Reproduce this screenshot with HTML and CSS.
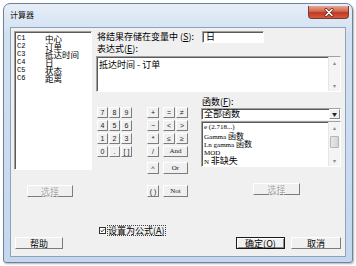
FILE: index.html
```html
<!DOCTYPE html>
<html>
<head>
<meta charset="utf-8">
<link rel="stylesheet" href="styles.css">
</head>
<body>
<div class="window">
  <div class="titlebar">
    <span class="title">计算器</span>
    <div class="close">
      <svg width="10" height="9" viewBox="0 0 10 9">
        <path d="M2 1.5 L8 7.5 M8 1.5 L2 7.5" stroke="#6b1d12" stroke-width="3" stroke-linecap="round"/>
        <path d="M2 1.5 L8 7.5 M8 1.5 L2 7.5" stroke="#fff" stroke-width="1.6" stroke-linecap="round"/>
      </svg>
    </div>
  </div>
  <div class="client">
    <div class="main">
      <div class="leftcol">
        <div class="varlist sunken">
          <div class="var"><span class="cid">C1</span><span class="cname">中心</span></div>
          <div class="var"><span class="cid">C2</span><span class="cname">订单</span></div>
          <div class="var"><span class="cid">C3</span><span class="cname">抵达时间</span></div>
          <div class="var"><span class="cid">C4</span><span class="cname">日</span></div>
          <div class="var"><span class="cid">C5</span><span class="cname">状态</span></div>
          <div class="var"><span class="cid">C6</span><span class="cname">距离</span></div>
        </div>
        <div class="btn disabled sel-left">选择</div>
      </div>
      <div class="rightcol">
        <div class="store-row">
          <span class="lbl store-lbl">将结果存储在变量中 (<u>S</u>):</span>
          <div class="input sunken">日</div>
        </div>
        <div class="lbl expr-lbl">表达式(<u>E</u>):</div>
        <div class="textarea sunken">
          <div class="ta-text">抵达时间 - 订单</div>
          <div class="vscroll">
            <span class="arr">&#9652;</span>
            <span class="arr">&#9662;</span>
          </div>
        </div>
        <div class="lower">
          <div class="keypad">
            <div class="digits">
              <div class="btn key">7</div><div class="btn key">8</div><div class="btn key">9</div>
              <div class="btn key">4</div><div class="btn key">5</div><div class="btn key">6</div>
              <div class="btn key">1</div><div class="btn key">2</div><div class="btn key">3</div>
              <div class="btn key">0</div><div class="btn key">.</div><div class="btn key">[ ]</div>
            </div>
            <div class="ops krows">
              <div class="btn key">+</div>
              <div class="btn key">−</div>
              <div class="btn key">*</div>
              <div class="btn key">/</div>
              <div class="btn key pow">^</div>
              <div class="btn key par">( )</div>
            </div>
            <div class="logic krows">
              <div class="btn key">=</div><div class="btn key">≠</div>
              <div class="btn key">&lt;</div><div class="btn key">&gt;</div>
              <div class="btn key">≤</div><div class="btn key">≥</div>
              <div class="btn key wide">And</div>
              <div class="btn key wide or">Or</div>
              <div class="btn key wide not">Not</div>
            </div>
          </div>
          <div class="funcs">
            <div class="lbl func-lbl">函数(<u>F</u>):</div>
            <div class="dropdown sunken">
              <span class="dd-text">全部函数</span>
              <span class="dd-btn">&#9660;</span>
            </div>
            <div class="flist sunken">
              <div class="fitems">
                <div class="fitem">e (2.718...)</div>
                <div class="fitem">Gamma <span class="cj">函数</span></div>
                <div class="fitem">Ln gamma <span class="cj">函数</span></div>
                <div class="fitem">MOD</div>
                <div class="fitem">N <span class="cj big">非缺失</span></div>
              </div>
              <div class="fscroll">
                <span class="arr">&#9652;</span>
                <span class="thumb"></span>
                <span class="arr">&#9662;</span>
              </div>
            </div>
            <div class="btn disabled sel-right">选择</div>
          </div>
        </div>
      </div>
    </div>
    <div class="check-row">
      <span class="checkbox">
        <svg width="7" height="7" viewBox="0 0 7 7"><path d="M1 3.5 L2.8 5.3 L6 1.6" stroke="#1b1b1b" stroke-width="1.3" fill="none"/></svg>
      </span>
      <span class="check-lbl">设置为公式(<u>A</u>)</span>
    </div>
    <div class="btn-row">
      <div class="btn help">帮助</div>
      <div class="btn ok">确定(<u>O</u>)</div>
      <div class="btn cancel">取消</div>
    </div>
  </div>
</div>
</body>
</html>
```
FILE: styles.css
```css
* { box-sizing: border-box; }
html, body { margin: 0; padding: 0; background: #fff; }
body {
  width: 356px; height: 266px; overflow: hidden;
  font-family: "Noto Sans CJK SC", "Noto Sans", sans-serif;
  font-size: 9px; color: #000;
}
u { text-decoration: underline; }

.window {
  margin: 3px 0 0 3px;
  width: 350px; height: 260px;
  border: 1px solid #6f8299;
  border-radius: 7px 7px 3px 3px;
  background: linear-gradient(#e6eef8, #d2e1f2 30px, #c4d7ee);
  padding: 0 6px 5px 6px;
  display: flex; flex-direction: column;
  box-shadow: 1px 1px 2px rgba(0,0,0,.3);
}
.titlebar { height: 23px; display: flex; align-items: flex-start; flex: none; }
.title { font-size: 8px; line-height: 10px; margin-top: 6px; color: #111; }
.close {
  margin-left: auto; margin-right: -3px; margin-top: 2px;
  width: 41px; height: 13px;
  border: 1px solid #7b3a30;
  border-top: none;
  border-radius: 0 0 4px 4px;
  background: linear-gradient(#e9a593, #d2664f 45%, #c03a22 55%, #d25a3e);
  display: flex; align-items: center; justify-content: center;
}

.client {
  flex: 1;
  border: 1px solid #8ea2ba;
  background: #f0f0f0;
  display: flex; flex-direction: column;
}
.main { display: flex; height: 170px; flex: none; }

.sunken {
  background: #fff;
  border: 1px solid;
  border-color: #a0a0a0 #fff #fff #a0a0a0;
  box-shadow: inset 1px 1px 0 #5a5a5a;
}

.leftcol { width: 81px; padding: 3px 0 0 3px; display: flex; flex-direction: column; flex: none; }
.varlist { width: 78px; height: 139px; padding: 2px 0 0 2px; }
.var { display: flex; height: 8px; line-height: 8px; white-space: nowrap; }
.cid { width: 28px; font-family: "Liberation Mono", "DejaVu Sans Mono", monospace; font-size: 7px; }
.cname { font-size: 8.5px; line-height: 8px; }

.btn {
  display: flex; align-items: center; justify-content: center;
  height: 12px;
  background: #f0f0f0;
  border: 1px solid;
  border-color: #fff #7c7c7c #7c7c7c #fff;
  font-size: 9px; line-height: 1; white-space: nowrap;
}
.disabled { color: #a6a6a6; text-shadow: 1px 1px 0 #fff; }
.sel-left { width: 46px; margin: 15px 0 0 13px; }

.rightcol { width: 245px; margin-left: 4px; padding-top: 3px; display: flex; flex-direction: column; flex: none; }
.lbl { font-size: 9px; line-height: 12px; white-space: nowrap; }
.store-row { display: flex; height: 12px; }
.store-lbl { width: 106px; padding-left: 1px; }
.input { width: 62px; height: 12px; font-size: 9px; line-height: 10px; padding-left: 3px; }
.expr-lbl { padding-left: 1px; }
.textarea { margin-top: 1px; height: 36px; display: flex; }
.ta-text { flex: 1; padding: 3px 0 0 2px; font-size: 9px; line-height: 10px; white-space: nowrap; }
.vscroll {
  width: 12px; background: #f4f4f4; border-left: 1px solid #e6e6e6;
  display: flex; flex-direction: column; justify-content: space-between; align-items: center;
  padding: 3px 0 2px; color: #8a8a8a; font-size: 6px; line-height: 6px;
}

.lower { display: flex; margin-top: 5px; }
.keypad { display: flex; margin: 10px 0 0 1px; }
.digits { display: grid; grid-template-columns: repeat(3, 11px); grid-auto-rows: 11px; gap: 2px 1px; }
.krows { display: grid; grid-template-rows: 11px 11px 11px 11px 1px 12px 7px 12px; row-gap: 2px; }
.ops { grid-template-columns: 12px; margin-left: 15px; }
.logic { grid-template-columns: 12px 12px; column-gap: 1px; margin-left: 4px; }
.key { height: auto; font-family: "Liberation Sans", Arial, sans-serif; font-size: 7px; color: #222; }
.pow { grid-row: 6; }
.par { grid-row: 8; }
.wide { grid-column: 1 / 3; font-family: "Liberation Serif", serif; font-size: 7px; }
.or { grid-row: 6; }
.not { grid-row: 8; }

.funcs { width: 140px; margin-left: 13px; display: flex; flex-direction: column; }
.func-lbl { line-height: 10px; height: 10px; padding-left: 1px; }
.dropdown { margin-top: 1px; height: 12px; display: flex; align-items: center; }
.dd-text { flex: 1; padding-left: 2px; font-size: 9px; line-height: 10px; }
.dd-btn {
  width: 11px; height: 10px;
  background: #f0f0f0; border: 1px solid; border-color: #fff #888 #888 #fff;
  font-size: 5px; line-height: 8px; text-align: center; color: #222;
}
.flist { margin-top: 1px; height: 46px; display: flex; }
.fitems { flex: 1; padding: 1px 0 0 2px; }
.fitem {
  height: 8.6px; line-height: 8.6px; white-space: nowrap;
  font-family: "Liberation Serif", serif; font-size: 7px;
}
.cj { font-family: "Noto Sans CJK SC", sans-serif; font-size: 8px; }
.cj.big { font-size: 9px; }
.fscroll {
  width: 12px; background: #f4f4f4; border-left: 1px solid #e6e6e6;
  display: flex; flex-direction: column; align-items: center;
  padding: 3px 0 2px; color: #8a8a8a; font-size: 6px; line-height: 6px;
}
.thumb {
  width: 9px; height: 12px; margin: 5px 0 auto;
  background: linear-gradient(90deg, #e8e8e8, #d4d4d4);
  border: 1px solid #b5b5b5; border-radius: 1px;
}
.sel-right { width: 47px; margin: 16px 0 0 52px; }

.check-row { display: flex; align-items: center; height: 9px; margin-top: 28px; padding-left: 88px; }
.checkbox {
  width: 7px; height: 7px; background: #fff; border: 1px solid #333;
  display: flex; align-items: center; justify-content: center;
}
.check-lbl {
  margin-left: 2px; font-size: 9px; line-height: 9px;
  outline: 1px dotted #444; outline-offset: 0;
}

.btn-row { display: flex; margin-top: 2px; padding-left: 4px; }
.help { width: 48px; }
.ok { width: 49px; margin-left: 173px; border: 1px solid #1a1a1a; box-shadow: inset 1px 1px 0 #fff, inset -1px -1px 0 #8a8a8a; }
.cancel { width: 50px; margin-left: 6px; }
```
